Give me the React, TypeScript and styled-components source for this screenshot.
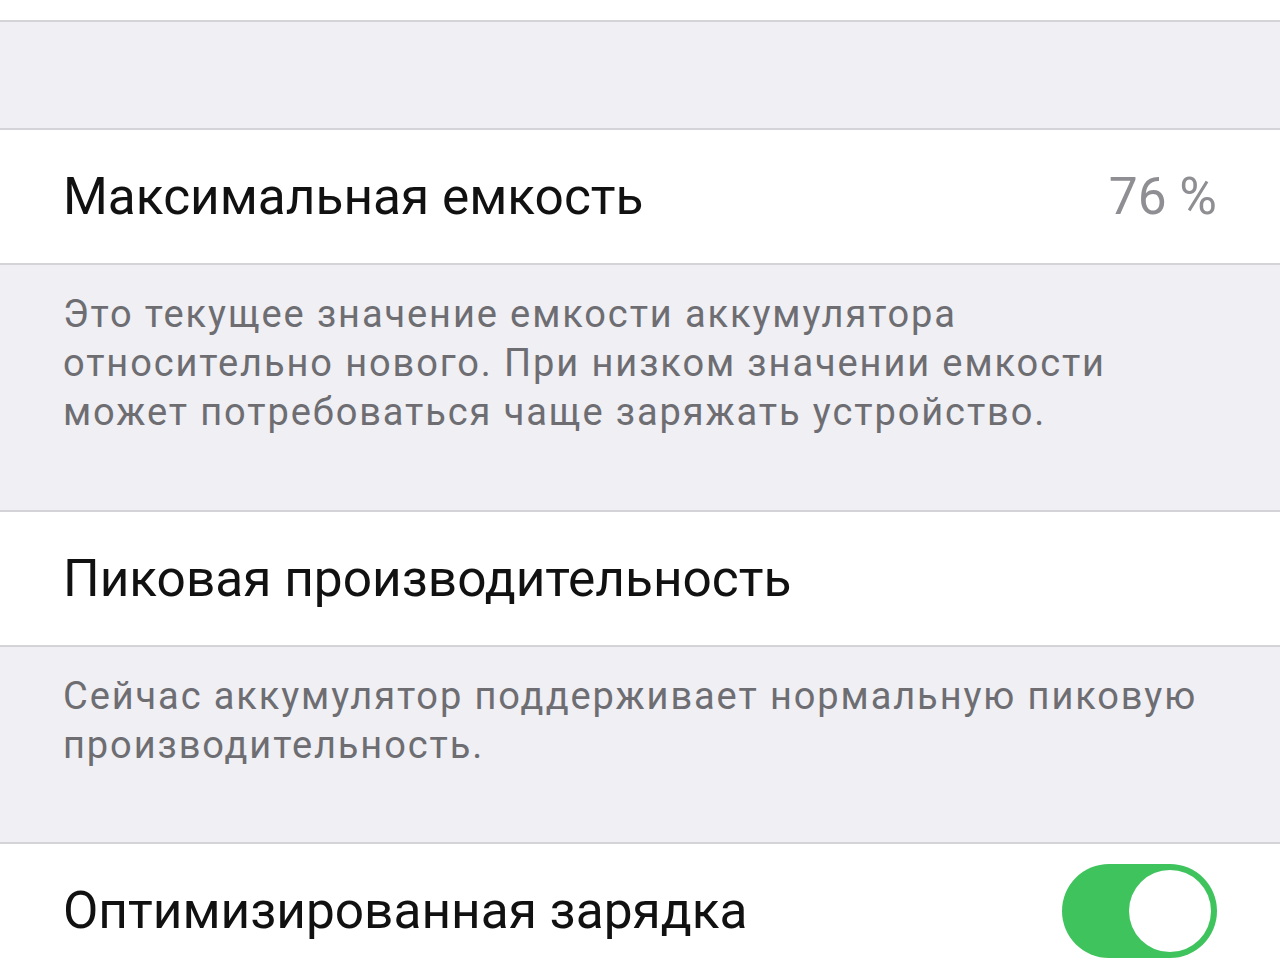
import styled, { createGlobalStyle } from "styled-components";

const GlobalStyle = createGlobalStyle`
  html, body {
    margin: 0;
    padding: 0;
    background: #efeff4;
  }
  body {
    font-family: Roboto, "Noto Sans", "Liberation Sans", sans-serif;
    -webkit-font-smoothing: antialiased;
  }
`;

const Screen = styled.div`
  width: 1280px;
  height: 960px;
  overflow: hidden;
  background: #efeff4;
  display: flex;
  flex-direction: column;

  & > * {
    flex-shrink: 0;
  }
`;

const TopStub = styled.div`
  height: 20px;
  background: #ffffff;
  border-bottom: 2px solid #d4d4d8;
`;

const Spacer = styled.div`
  height: 106px;
`;

const Group = styled.div`
  background: #ffffff;
  border-top: 2px solid #d4d4d8;
  border-bottom: 2px solid #d4d4d8;
`;

const Cell = styled.div`
  height: 133px;
  padding: 0 63px;
  display: flex;
  align-items: center;
  justify-content: space-between;
`;

const Title = styled.span`
  font-size: 51.4px;
  color: #111111;
`;

const Value = styled.span`
  font-size: 51.4px;
  color: #8e8e93;
`;

const Footer = styled.p<{ $bottom: number }>`
  margin: 0;
  padding: 25px 63px ${(p) => p.$bottom}px;
  font-size: 38px;
  line-height: 49px;
  color: #6d6d72;
  letter-spacing: 1.9px;
`;

const Toggle = styled.div<{ $on: boolean }>`
  width: 155px;
  height: 94px;
  border-radius: 47px;
  background: ${(p) => (p.$on ? "#3fc35d" : "#e5e5ea")};
  display: flex;
  align-items: center;
  justify-content: ${(p) => (p.$on ? "flex-end" : "flex-start")};
  padding: 6px;
  box-sizing: border-box;
`;

const Knob = styled.div`
  width: 82px;
  height: 82px;
  border-radius: 50%;
  background: #ffffff;
`;

export default function App() {
  return (
    <Screen>
      <GlobalStyle />
      <TopStub />
      <Spacer />
      <Group>
        <Cell>
          <Title>Максимальная емкость</Title>
          <Value>76 %</Value>
        </Cell>
      </Group>
      <Footer $bottom={73}>
        Это текущее значение емкости аккумулятора
        <br />
        относительно нового. При низком значении емкости
        <br />
        может потребоваться чаще заряжать устройство.
      </Footer>
      <Group>
        <Cell>
          <Title>Пиковая производительность</Title>
        </Cell>
      </Group>
      <Footer $bottom={72}>
        Сейчас аккумулятор поддерживает нормальную пиковую
        <br />
        производительность.
      </Footer>
      <Group>
        <Cell>
          <Title>Оптимизированная зарядка</Title>
          <Toggle $on={true}>
            <Knob />
          </Toggle>
        </Cell>
      </Group>
    </Screen>
  );
}
